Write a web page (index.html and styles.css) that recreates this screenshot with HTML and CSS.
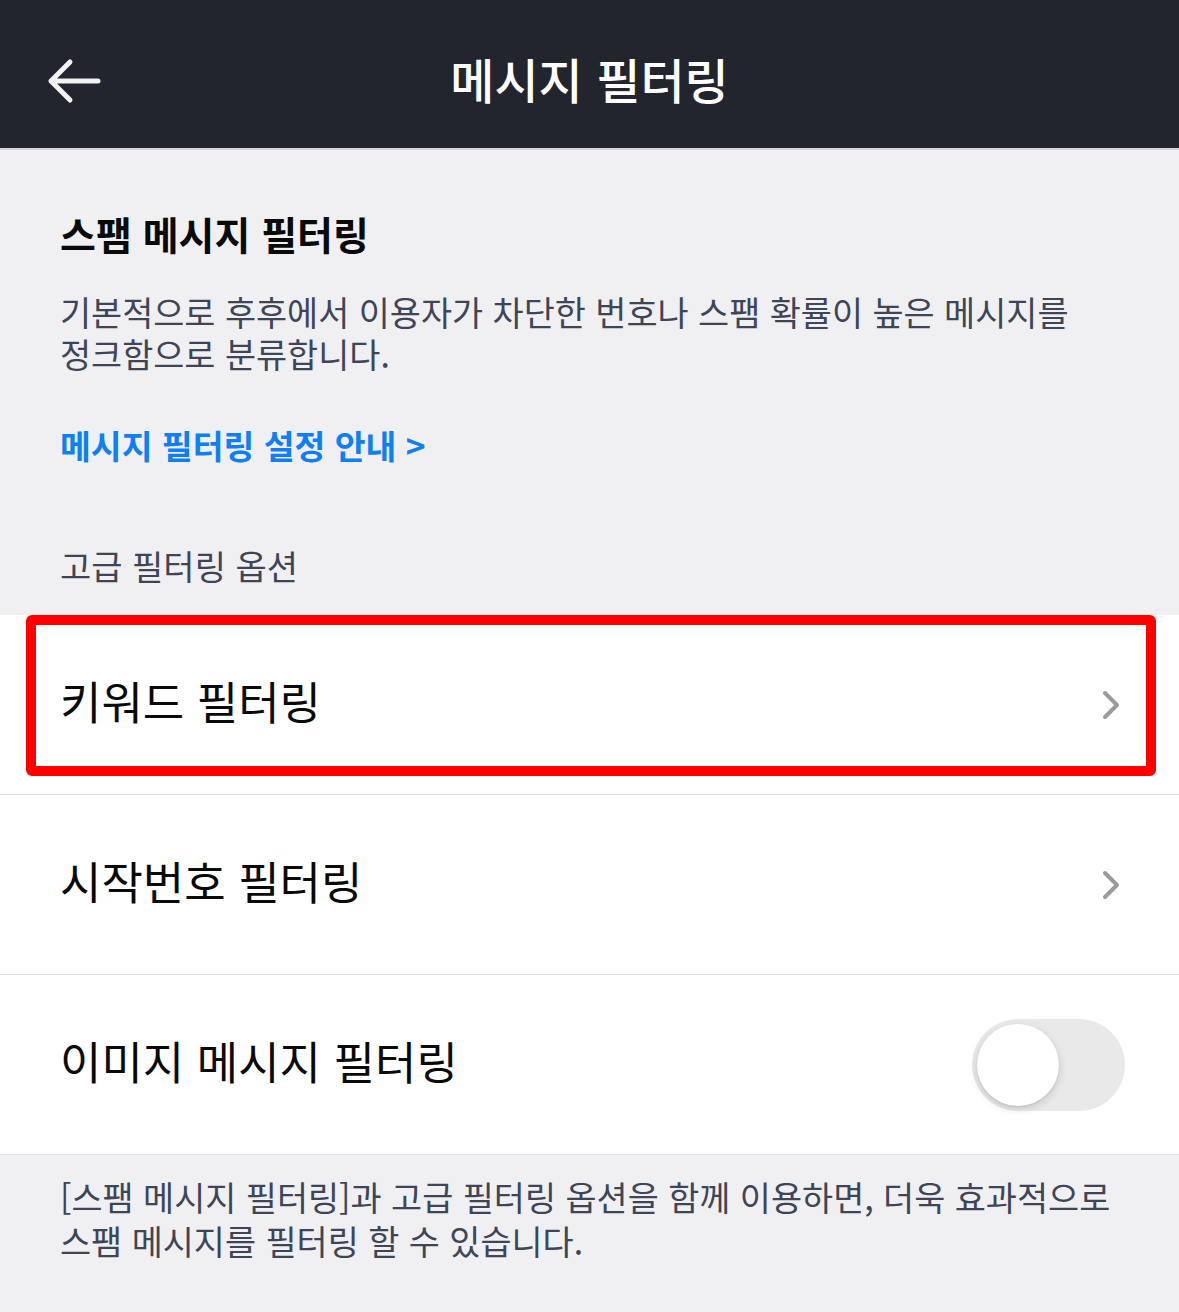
FILE: index.html
```html
<!DOCTYPE html>
<html lang="ko">
<head>
<meta charset="utf-8">
<title>메시지 필터링</title>
<link rel="stylesheet" href="styles.css">
</head>
<body>
<header class="topbar">
  <span class="back">
    <svg width="56" height="46" viewBox="0 0 56 46"><path d="M24 4 L5 23 L24 42 M5 23 H52" fill="none" stroke="#f2f2f2" stroke-width="5" stroke-linecap="round" stroke-linejoin="round"/></svg>
  </span>
  <h1 class="topbar-title">메시지 필터링</h1>
</header>
<section class="intro">
  <h2 class="intro-title">스팸 메시지 필터링</h2>
  <p class="intro-desc">기본적으로 후후에서 이용자가 차단한 번호나 스팸 확률이 높은 메시지를<br>정크함으로 분류합니다.</p>
  <a class="intro-link">메시지 필터링 설정 안내 &gt;</a>
  <div class="group-label">고급 필터링 옵션</div>
</section>
<ul class="list">
  <li class="row row-highlighted">
    <span class="row-text">키워드 필터링</span>
    <svg class="chev" width="22" height="32" viewBox="0 0 22 32"><path d="M4 4 L16 16 L4 28" fill="none" stroke="#9b9b9b" stroke-width="4" stroke-linecap="round" stroke-linejoin="round"/></svg>
    <span class="highlight"></span>
  </li>
  <li class="row">
    <span class="row-text">시작번호 필터링</span>
    <svg class="chev" width="22" height="32" viewBox="0 0 22 32"><path d="M4 4 L16 16 L4 28" fill="none" stroke="#9b9b9b" stroke-width="4" stroke-linecap="round" stroke-linejoin="round"/></svg>
  </li>
  <li class="row">
    <span class="row-text">이미지 메시지 필터링</span>
    <span class="toggle"><span class="knob"></span></span>
  </li>
</ul>
<footer class="note">[스팸 메시지 필터링]과 고급 필터링 옵션을 함께 이용하면, 더욱 효과적으로<br>스팸 메시지를 필터링 할 수 있습니다.</footer>
</body>
</html>
```
FILE: styles.css
```css
* { box-sizing: border-box; }
html, body { margin: 0; padding: 0; }
body {
  width: 1179px;
  height: 1312px;
  overflow: hidden;
  background: #f0f0f3;
  font-family: "Noto Sans CJK KR", "Noto Sans", sans-serif;
}
.topbar {
  height: 150px;
  background: #23252e;
  border-bottom: 2px solid #d6d6da;
  display: flex;
  align-items: center;
  justify-content: center;
  position: relative;
}
.back {
  position: absolute;
  left: 46px;
  top: 58px;
  display: flex;
}
.topbar-title {
  margin: 0;
  padding-top: 8px;
  color: #ffffff;
  font-size: 48px;
  font-weight: 500;
  line-height: 60px;
}
.intro {
  padding: 57px 60px 27px;
  display: flex;
  flex-direction: column;
  align-items: flex-start;
}
.intro-title {
  margin: 0;
  font-size: 39px;
  font-weight: 700;
  line-height: 52px;
  color: #0a0a0a;
}
.intro-desc {
  margin: 32px 0 0;
  font-size: 33.8px;
  line-height: 42px;
  color: #3d4556;
}
.intro-link {
  margin-top: 45px;
  font-size: 33.5px;
  line-height: 50px;
  font-weight: 700;
  color: #0f7ff5;
}
.group-label {
  margin-top: 74px;
  font-size: 34px;
  line-height: 44px;
  color: #3d4556;
}
.list {
  list-style: none;
  margin: 0;
  padding: 0;
  background: #ffffff;
}
.row {
  position: relative;
  height: 180px;
  border-bottom: 1px solid #dde0e5;
  display: flex;
  align-items: center;
  justify-content: space-between;
  padding: 0 58px 0 60px;
}
.row:last-child { border-bottom: 1px solid #dce2ea; }
.row-text {
  font-size: 45px;
  line-height: 60px;
  margin-bottom: 7px;
  color: #0a0a0a;
}
.chev { margin-right: -2px; }
.highlight {
  position: absolute;
  left: 26px;
  top: 0;
  width: 1130px;
  height: 161px;
  border: 10px solid #ff0000;
  border-radius: 6px;
  pointer-events: none;
}
.toggle {
  width: 153px;
  height: 92px;
  border-radius: 46px;
  background: #e9e9ea;
  position: relative;
  margin-right: -4px;
}
.knob {
  position: absolute;
  left: 5px;
  top: 5px;
  width: 82px;
  height: 82px;
  border-radius: 50%;
  background: #ffffff;
  box-shadow: 0 3px 8px rgba(0,0,0,0.15), 0 1px 2px rgba(0,0,0,0.08);
}
.note {
  padding: 20px 60px 0;
  font-size: 33.8px;
  line-height: 44px;
  color: #3d4556;
}
```
